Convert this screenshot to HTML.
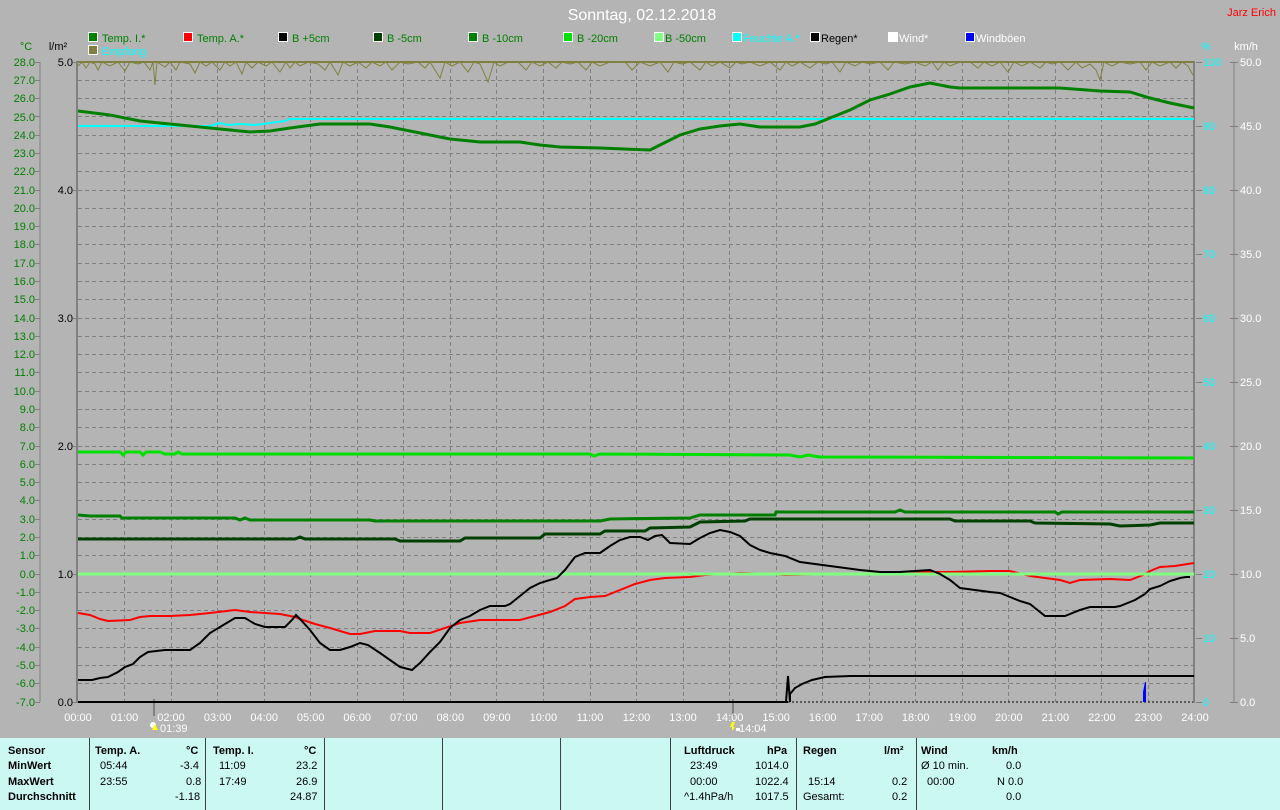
<!DOCTYPE html>
<html><head><meta charset="utf-8"><style>
body{margin:0;width:1280px;height:810px;overflow:hidden;background:#b4b4b4;font-family:"Liberation Sans",sans-serif}
svg{position:absolute;left:0;top:0}
.tb{position:absolute;left:0;top:738px;width:1280px;height:72px;background:#ccf8f4}
.c{position:absolute;font-size:11px;color:#000;white-space:pre}
.b{font-weight:bold}
.v{position:absolute;top:0;width:1px;height:72px;background:#404040}
</style></head><body>
<svg width="1280" height="738" font-family="Liberation Sans, sans-serif" font-size="11">
<text x="642" y="20" fill="#fff" font-size="16" text-anchor="middle">Sonntag, 02.12.2018</text>
<text x="1276" y="16" fill="#f00" font-size="11" text-anchor="end">Jarz Erich</text>
<g stroke="#fff" stroke-width="1">
<rect x="88.5" y="32.5" width="9" height="9" fill="#008000"/>
<rect x="183.5" y="32.5" width="9" height="9" fill="#f00"/>
<rect x="278.5" y="32.5" width="9" height="9" fill="#000"/>
<rect x="373.5" y="32.5" width="9" height="9" fill="#004000"/>
<rect x="468.5" y="32.5" width="9" height="9" fill="#008000"/>
<rect x="563.5" y="32.5" width="9" height="9" fill="#00e000"/>
<rect x="654.5" y="32.5" width="9" height="9" fill="#80ff80"/>
<rect x="732.5" y="32.5" width="9" height="9" fill="#0ff"/>
<rect x="810.5" y="32.5" width="9" height="9" fill="#000"/>
<rect x="888.5" y="32.5" width="9" height="9" fill="#fff"/>
<rect x="965.5" y="32.5" width="9" height="9" fill="#00f"/>
<rect x="88.5" y="45.5" width="9" height="9" fill="#808040"/>
</g>
<g font-size="11">
<text x="102" y="42" fill="#008000">Temp. I.*</text>
<text x="197" y="42" fill="#008000">Temp. A.*</text>
<text x="292" y="42" fill="#008000">B +5cm</text>
<text x="387" y="42" fill="#008000">B -5cm</text>
<text x="482" y="42" fill="#008000">B -10cm</text>
<text x="577" y="42" fill="#008000">B -20cm</text>
<text x="665" y="42" fill="#008000">B -50cm</text>
<text x="743" y="42" fill="#0ff">Feuchte A.*</text>
<text x="821" y="42" fill="#000">Regen*</text>
<text x="899" y="42" fill="#fff">Wind*</text>
<text x="976" y="42" fill="#fff">Windböen</text>
<text x="102" y="55" fill="#0ff">Empfang</text>
<text x="26" y="50" fill="#008000" text-anchor="middle">°C</text>
<text x="58" y="50" fill="#000" text-anchor="middle">l/m²</text>
<text x="1099" y="0" fill="#0ff"></text>
<text x="1099" y="0"></text>
<text x="1099" y="0"></text>
<text x="1099" y="0"></text>
<text x="1099" y="0"></text>
<text x="1099" y="0"></text>
<text x="1099" y="0"></text>
<text x="1099" y="0"></text>
<text x="1099" y="0"></text>
<text x="1099" y="0"></text>
<text x="1099" y="0"></text>
<text x="1099" y="0"></text>
<text x="1206" y="50" fill="#0ff" text-anchor="middle">%</text>
<text x="1246" y="50" fill="#fff" text-anchor="middle">km/h</text>
</g>
<!-- grid horizontal -->
<g stroke="#808080" stroke-dasharray="4,3" stroke-width="1">
<line x1="78" x2="1194" y1="80.5" y2="80.5"/><line x1="78" x2="1194" y1="98.5" y2="98.5"/><line x1="78" x2="1194" y1="116.5" y2="116.5"/><line x1="78" x2="1194" y1="135.5" y2="135.5"/><line x1="78" x2="1194" y1="153.5" y2="153.5"/><line x1="78" x2="1194" y1="171.5" y2="171.5"/><line x1="78" x2="1194" y1="190.5" y2="190.5"/><line x1="78" x2="1194" y1="208.5" y2="208.5"/><line x1="78" x2="1194" y1="226.5" y2="226.5"/><line x1="78" x2="1194" y1="244.5" y2="244.5"/><line x1="78" x2="1194" y1="263.5" y2="263.5"/><line x1="78" x2="1194" y1="281.5" y2="281.5"/><line x1="78" x2="1194" y1="299.5" y2="299.5"/><line x1="78" x2="1194" y1="318.5" y2="318.5"/><line x1="78" x2="1194" y1="336.5" y2="336.5"/><line x1="78" x2="1194" y1="354.5" y2="354.5"/><line x1="78" x2="1194" y1="372.5" y2="372.5"/><line x1="78" x2="1194" y1="391.5" y2="391.5"/><line x1="78" x2="1194" y1="409.5" y2="409.5"/><line x1="78" x2="1194" y1="427.5" y2="427.5"/><line x1="78" x2="1194" y1="446.5" y2="446.5"/><line x1="78" x2="1194" y1="464.5" y2="464.5"/><line x1="78" x2="1194" y1="482.5" y2="482.5"/><line x1="78" x2="1194" y1="500.5" y2="500.5"/><line x1="78" x2="1194" y1="519.5" y2="519.5"/><line x1="78" x2="1194" y1="537.5" y2="537.5"/><line x1="78" x2="1194" y1="555.5" y2="555.5"/><line x1="78" x2="1194" y1="574.5" y2="574.5"/><line x1="78" x2="1194" y1="592.5" y2="592.5"/><line x1="78" x2="1194" y1="610.5" y2="610.5"/><line x1="78" x2="1194" y1="628.5" y2="628.5"/><line x1="78" x2="1194" y1="647.5" y2="647.5"/><line x1="78" x2="1194" y1="665.5" y2="665.5"/><line x1="78" x2="1194" y1="683.5" y2="683.5"/>
<line y1="62" y2="702" x1="124.5" x2="124.5"/><line y1="62" y2="702" x1="171.5" x2="171.5"/><line y1="62" y2="702" x1="217.5" x2="217.5"/><line y1="62" y2="702" x1="264.5" x2="264.5"/><line y1="62" y2="702" x1="310.5" x2="310.5"/><line y1="62" y2="702" x1="357.5" x2="357.5"/><line y1="62" y2="702" x1="403.5" x2="403.5"/><line y1="62" y2="702" x1="450.5" x2="450.5"/><line y1="62" y2="702" x1="496.5" x2="496.5"/><line y1="62" y2="702" x1="543.5" x2="543.5"/><line y1="62" y2="702" x1="590.5" x2="590.5"/><line y1="62" y2="702" x1="636.5" x2="636.5"/><line y1="62" y2="702" x1="683.5" x2="683.5"/><line y1="62" y2="702" x1="729.5" x2="729.5"/><line y1="62" y2="702" x1="776.5" x2="776.5"/><line y1="62" y2="702" x1="822.5" x2="822.5"/><line y1="62" y2="702" x1="869.5" x2="869.5"/><line y1="62" y2="702" x1="915.5" x2="915.5"/><line y1="62" y2="702" x1="962.5" x2="962.5"/><line y1="62" y2="702" x1="1008.5" x2="1008.5"/><line y1="62" y2="702" x1="1055.5" x2="1055.5"/><line y1="62" y2="702" x1="1101.5" x2="1101.5"/><line y1="62" y2="702" x1="1148.5" x2="1148.5"/>
</g>
<!-- axes -->
<g stroke="#808080" stroke-width="2" fill="none">
<line x1="77" y1="61" x2="77" y2="703"/>
<line x1="1194" y1="61" x2="1194" y2="703"/>
<line x1="40" y1="62" x2="40" y2="702" stroke-width="1"/>
<line x1="1234" y1="62" x2="1234" y2="702" stroke-width="1"/>
<line x1="154" y1="699" x2="154" y2="716"/>
<line x1="733" y1="699" x2="733" y2="716"/>
</g>
<line x1="78" y1="62" x2="1194" y2="62" stroke="#808040" stroke-width="2"/>
<g stroke="#808080" stroke-width="1">
<path d="M35 62.5h5M35 80.5h5M35 98.5h5M35 116.5h5M35 135.5h5M35 153.5h5M35 171.5h5M35 190.5h5M35 208.5h5M35 226.5h5M35 244.5h5M35 263.5h5M35 281.5h5M35 299.5h5M35 318.5h5M35 336.5h5M35 354.5h5M35 372.5h5M35 391.5h5M35 409.5h5M35 427.5h5M35 446.5h5M35 464.5h5M35 482.5h5M35 500.5h5M35 519.5h5M35 537.5h5M35 555.5h5M35 574.5h5M35 592.5h5M35 610.5h5M35 628.5h5M35 647.5h5M35 665.5h5M35 683.5h5M35 702.5h5"/>
<path d="M1196 62.5h6M1196 126.5h6M1196 190.5h6M1196 254.5h6M1196 318.5h6M1196 382.5h6M1196 446.5h6M1196 510.5h6M1196 574.5h6M1196 638.5h6M1196 702.5h6"/>
<path d="M1230 62.5h8M1230 126.5h8M1230 190.5h8M1230 254.5h8M1230 318.5h8M1230 382.5h8M1230 446.5h8M1230 510.5h8M1230 574.5h8M1230 638.5h8M1230 702.5h8"/>
<path d="M73 62.5h4M73 190.5h4M73 318.5h4M73 446.5h4M73 574.5h4M73 702.5h4"/>
</g>
<g fill="#008000" text-anchor="end">
<text x="35" y="66">28.0</text><text x="35" y="84">27.0</text><text x="35" y="102">26.0</text><text x="35" y="121">25.0</text><text x="35" y="139">24.0</text><text x="35" y="157">23.0</text><text x="35" y="175">22.0</text><text x="35" y="194">21.0</text><text x="35" y="212">20.0</text><text x="35" y="230">19.0</text><text x="35" y="248">18.0</text><text x="35" y="267">17.0</text><text x="35" y="285">16.0</text><text x="35" y="303">15.0</text><text x="35" y="322">14.0</text><text x="35" y="340">13.0</text><text x="35" y="358">12.0</text><text x="35" y="376">11.0</text><text x="35" y="395">10.0</text><text x="35" y="413">9.0</text><text x="35" y="431">8.0</text><text x="35" y="450">7.0</text><text x="35" y="468">6.0</text><text x="35" y="486">5.0</text><text x="35" y="504">4.0</text><text x="35" y="523">3.0</text><text x="35" y="541">2.0</text><text x="35" y="559">1.0</text><text x="35" y="578">0.0</text><text x="35" y="596">-1.0</text><text x="35" y="614">-2.0</text><text x="35" y="632">-3.0</text><text x="35" y="651">-4.0</text><text x="35" y="669">-5.0</text><text x="35" y="687">-6.0</text><text x="35" y="706">-7.0</text>
</g>
<g fill="#000" text-anchor="end">
<text x="73" y="66">5.0</text><text x="73" y="194">4.0</text><text x="73" y="322">3.0</text><text x="73" y="450">2.0</text><text x="73" y="578">1.0</text><text x="73" y="706">0.0</text>
</g>
<g fill="#0ff">
<text x="1203" y="66">100</text><text x="1203" y="130">90</text><text x="1203" y="194">80</text><text x="1203" y="258">70</text><text x="1203" y="322">60</text><text x="1203" y="386">50</text><text x="1203" y="450">40</text><text x="1203" y="514">30</text><text x="1203" y="578">20</text><text x="1203" y="642">10</text><text x="1203" y="706">0</text>
</g>
<g fill="#fff">
<text x="1240" y="66">50.0</text><text x="1240" y="130">45.0</text><text x="1240" y="194">40.0</text><text x="1240" y="258">35.0</text><text x="1240" y="322">30.0</text><text x="1240" y="386">25.0</text><text x="1240" y="450">20.0</text><text x="1240" y="514">15.0</text><text x="1240" y="578">10.0</text><text x="1240" y="642">5.0</text><text x="1240" y="706">0.0</text>
</g>
<g fill="#fff" text-anchor="middle">
<text x="78" y="721">00:00</text><text x="124.5" y="721">01:00</text><text x="171" y="721">02:00</text><text x="217.6" y="721">03:00</text><text x="264.2" y="721">04:00</text><text x="310.7" y="721">05:00</text><text x="357.2" y="721">06:00</text><text x="403.8" y="721">07:00</text><text x="450.3" y="721">08:00</text><text x="496.9" y="721">09:00</text><text x="543.4" y="721">10:00</text><text x="590" y="721">11:00</text><text x="636.5" y="721">12:00</text><text x="683" y="721">13:00</text><text x="729.6" y="721">14:00</text><text x="776.1" y="721">15:00</text><text x="822.7" y="721">16:00</text><text x="869.2" y="721">17:00</text><text x="915.7" y="721">18:00</text><text x="962.3" y="721">19:00</text><text x="1008.8" y="721">20:00</text><text x="1055.4" y="721">21:00</text><text x="1101.9" y="721">22:00</text><text x="1148.4" y="721">23:00</text><text x="1195" y="721">24:00</text>
</g>
<text x="160" y="732" fill="#fff">01:39</text>
<text x="739" y="732" fill="#fff">14:04</text>
<circle cx="153" cy="725" r="3" fill="#fff"/><path d="M155 724l3 6h-6z" fill="#ff0"/>
<path d="M732 722l3 0-2 5h2l-3 4 0-4h-2z" fill="#ff0"/><rect x="736" y="728" width="4" height="3" fill="#fff"/>

<!-- Empfang -->
<polyline fill="none" stroke="#808040" stroke-width="1" points="78,66 82,62 86,68 90,62 95,64 98,70 102,62 110,66 118,62 125,71 130,62 138,64 144,62 150,70 153,62 155,85 157,62 165,67 170,62 176,70 180,62 190,64 195,73 200,62 206,66 212,62 220,70 225,62 230,66 236,62 242,74 246,62 252,68 258,62 266,66 272,62 280,72 286,62 290,68 295,62 300,66 308,62 318,64 325,70 330,62 338,75 343,62 350,66 358,62 366,68 372,62 380,66 386,62 392,70 400,62 408,64 418,62 425,68 430,62 440,78 445,62 452,66 460,62 468,72 474,62 480,64 488,82 494,62 500,66 508,62 518,62 526,70 532,62 540,66 548,62 556,68 562,62 570,64 578,62 586,70 592,62 600,66 610,62 625,62 632,70 640,62 650,66 660,62 668,72 674,62 682,64 690,62 700,70 706,62 712,66 720,62 730,68 736,62 742,64 750,62 760,66 770,62 780,70 786,62 792,66 800,62 810,68 818,62 826,64 832,62 840,72 846,62 855,66 862,62 870,64 880,62 888,70 894,62 905,64 915,62 925,66 932,62 938,70 944,62 950,66 960,62 970,62 978,68 984,62 992,66 1000,62 1008,72 1014,62 1022,66 1030,62 1040,68 1046,62 1052,64 1060,62 1068,70 1076,62 1082,68 1090,64 1096,70 1100,80 1104,62 1112,66 1120,62 1130,64 1140,62 1146,70 1152,62 1160,66 1170,62 1176,68 1182,62 1188,66 1193,75"/>
<!-- Feuchte -->
<polyline fill="none" stroke="#0ff" stroke-width="2" points="78,126 210,126 220,123 228,125 240,124 255,125 270,123 285,121 290,119 1194,119"/>
<!-- Temp I -->
<polyline fill="none" stroke="#008000" stroke-width="3" points="78,111 110,115 140,121 170,124 200,127 230,130 250,132 270,131 290,128 305,126 320,124 370,124 390,127 410,131 430,135 450,139 480,142 520,142 540,145 560,147 600,148 650,150 660,145 680,135 700,129 720,126 740,124 760,127 800,127 815,124 830,118 850,110 870,100 890,94 910,87 930,83 950,87 960,88 1060,88 1100,91 1130,92 1150,98 1170,103 1194,108"/>
<!-- B -20 -->
<polyline fill="none" stroke="#00e000" stroke-width="3" points="78,452 120,452 123,455 126,452 140,452 143,455 146,452 160,452 165,454 175,454 178,452 182,454 590,454 594,456 600,454 790,455 800,457 808,455 820,457 1194,458"/>
<!-- B -10 -->
<polyline fill="none" stroke="#008000" stroke-width="3" points="78,515 90,516 120,516 122,518 235,518 240,520 245,518 250,520 370,520 375,521 600,521 610,519 690,518 700,515 775,515 776,512 895,512 900,510 905,512 1055,512 1058,514 1062,512 1194,512"/>
<!-- B -5 -->
<polyline fill="none" stroke="#004000" stroke-width="3" points="78,539 295,539 300,537 305,539 395,539 400,541 460,541 465,538 540,538 545,534 600,534 605,531 645,531 650,528 690,527 700,522 745,521 750,519 950,519 955,521 1030,521 1035,523 1110,524 1120,526 1150,525 1160,523 1194,523"/>
<!-- Temp A -->
<polyline fill="none" stroke="#f00" stroke-width="2" points="78,613 90,615 100,619 108,621 130,620 140,617 150,616 170,616 190,615 210,613 235,610 250,612 265,613 280,614 295,617 300,619 315,624 330,628 350,634 360,634 375,631 400,631 410,633 430,633 445,628 460,623 480,620 520,620 535,616 550,612 565,606 575,599 590,597 605,596 620,590 635,584 650,580 665,578 690,577 705,575 740,573 770,574 785,575 900,573 925,572 950,572 990,571 1010,571 1030,576 1060,580 1070,583 1080,580 1110,579 1130,580 1143,575 1150,571 1160,567 1175,566 1194,563"/>
<!-- B -50 -->
<line x1="78" y1="574" x2="1194" y2="574" stroke="#80ff80" stroke-width="3"/>
<!-- B +5 -->
<polyline fill="none" stroke="#000" stroke-width="2" points="78,680 92,680 100,678 108,677 118,672 125,667 133,664 140,657 148,652 165,650 190,650 200,643 210,633 220,627 235,618 245,618 255,624 265,627 285,627 292,620 296,615 300,619 310,630 320,643 330,650 340,650 350,647 360,643 368,645 380,653 390,660 400,667 412,670 420,663 430,652 440,642 450,628 460,620 470,616 480,610 490,606 505,606 510,604 520,596 530,588 540,583 550,580 557,578 565,570 575,557 585,553 600,553 610,546 620,540 630,537 640,537 648,540 655,536 662,535 670,543 690,544 700,538 710,533 720,530 730,532 740,536 750,545 760,550 770,553 785,556 800,562 830,566 860,570 880,572 900,572 930,570 940,574 950,580 960,588 990,592 1000,593 1010,597 1020,601 1030,604 1040,612 1045,616 1065,616 1080,610 1090,607 1115,607 1120,606 1135,600 1145,594 1150,589 1160,586 1170,581 1180,578 1186,577 1190,577"/>
<!-- Regen -->
<line x1="78" y1="702" x2="788" y2="702" stroke="#000" stroke-width="2"/>
<line x1="788" y1="702" x2="1193" y2="702" stroke="#000" stroke-width="1" stroke-dasharray="2,2"/>
<polyline fill="none" stroke="#000" stroke-width="2" points="786,702 788,676 790,702 790,694 795,688 802,684 812,680 825,677 850,676 1194,676"/>
<path d="M1143 702v-10l2-10h1v20z" fill="#00f"/>
</svg>
<div class="tb">
<div class="v" style="left:89px"></div><div class="v" style="left:205px"></div><div class="v" style="left:324px"></div><div class="v" style="left:442px"></div><div class="v" style="left:560px"></div><div class="v" style="left:670px"></div><div class="v" style="left:796px"></div><div class="v" style="left:916px"></div>
<div class="c b" style="left:8px;top:7px">Sensor</div>
<div class="c b" style="left:8px;top:22px">MinWert</div>
<div class="c b" style="left:8px;top:38px">MaxWert</div>
<div class="c b" style="left:8px;top:53px">Durchschnitt</div>
<div class="c b" style="left:95px;top:7px">Temp. A.</div><div class="c b" style="left:186px;top:7px">°C</div>
<div class="c" style="left:100px;top:22px">05:44</div><div class="c" style="left:180px;top:22px">-3.4</div>
<div class="c" style="left:100px;top:38px">23:55</div><div class="c" style="left:186px;top:38px">0.8</div>
<div class="c" style="left:175px;top:53px">-1.18</div>
<div class="c b" style="left:213px;top:7px">Temp. I.</div><div class="c b" style="left:304px;top:7px">°C</div>
<div class="c" style="left:219px;top:22px">11:09</div><div class="c" style="left:296px;top:22px">23.2</div>
<div class="c" style="left:219px;top:38px">17:49</div><div class="c" style="left:296px;top:38px">26.9</div>
<div class="c" style="left:290px;top:53px">24.87</div>
<div class="c b" style="left:684px;top:7px">Luftdruck</div><div class="c b" style="left:767px;top:7px">hPa</div>
<div class="c" style="left:690px;top:22px">23:49</div><div class="c" style="left:755px;top:22px">1014.0</div>
<div class="c" style="left:690px;top:38px">00:00</div><div class="c" style="left:755px;top:38px">1022.4</div>
<div class="c" style="left:684px;top:53px">^1.4hPa/h</div><div class="c" style="left:755px;top:53px">1017.5</div>
<div class="c b" style="left:803px;top:7px">Regen</div><div class="c b" style="left:884px;top:7px">l/m²</div>
<div class="c" style="left:808px;top:38px">15:14</div><div class="c" style="left:892px;top:38px">0.2</div>
<div class="c" style="left:803px;top:53px">Gesamt:</div><div class="c" style="left:892px;top:53px">0.2</div>
<div class="c b" style="left:921px;top:7px">Wind</div><div class="c b" style="left:992px;top:7px">km/h</div>
<div class="c" style="left:921px;top:22px">Ø 10 min.</div><div class="c" style="left:1006px;top:22px">0.0</div>
<div class="c" style="left:927px;top:38px">00:00</div><div class="c" style="left:997px;top:38px">N 0.0</div>
<div class="c" style="left:1006px;top:53px">0.0</div>
</div>
</body></html>
